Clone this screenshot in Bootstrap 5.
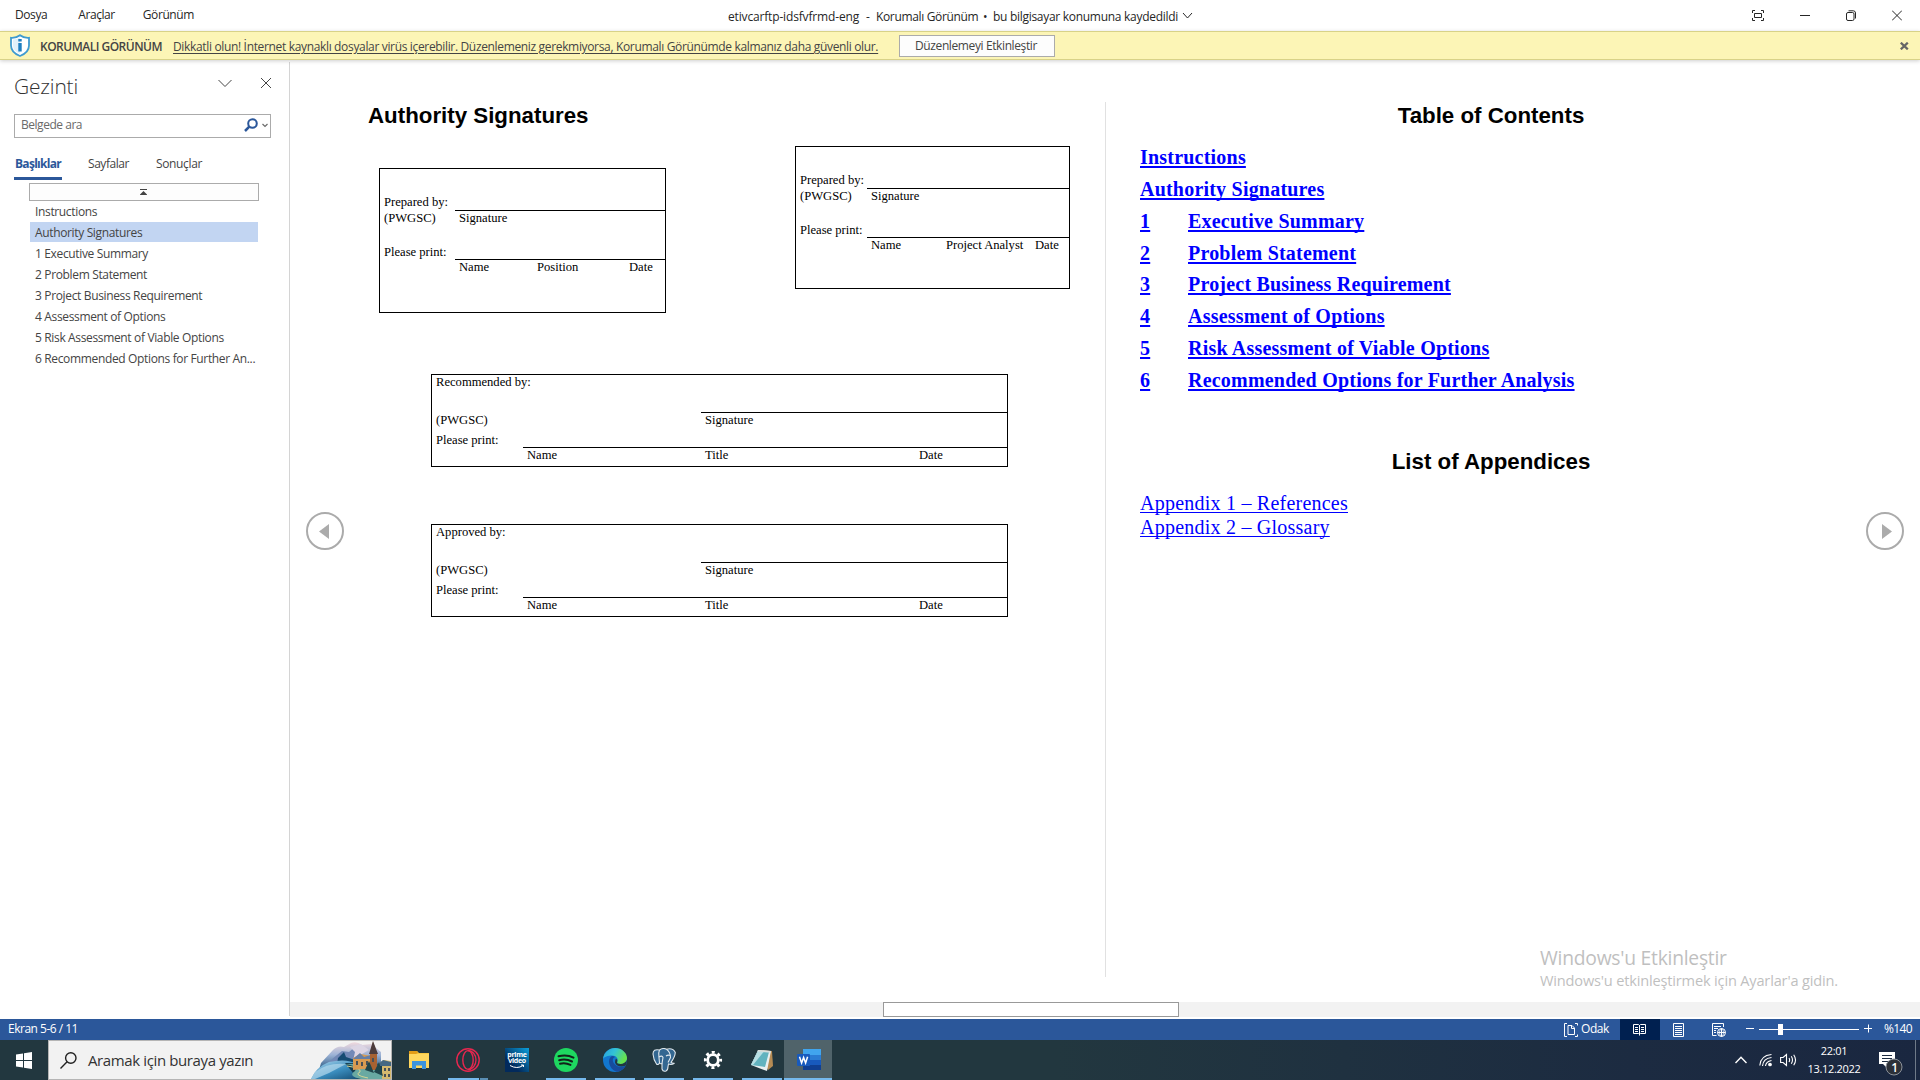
<!DOCTYPE html>
<html lang="tr">
<head>
<meta charset="utf-8">
<meta name="viewport" content="width=device-width, initial-scale=1">
<title>etivcarftp-idsfvfrmd-eng - Korumalı Görünüm</title>
<link rel="stylesheet" href="https://cdn.jsdelivr.net/npm/bootstrap@5.3.0/dist/css/bootstrap.min.css">
<style>
  html, body { height: 100%; overflow: hidden; }
  body { font: 12px/18px "Open Sans", "Noto Sans", sans-serif; letter-spacing: -.35px; color: #262626; background: #fff; white-space: nowrap; }
  svg { display: block; flex: none; }
  .line-ico { fill: none; stroke: currentColor; }
  .app-shell { width: 1920px; height: 1080px; }

  /* title bar */
  .title-bar { height: 31px; }
  .menu-side { width: 728px; padding: 0 0 2px 15px; gap: 31px; letter-spacing: -.42px; }
  .menu-side span:nth-child(3) { margin-left: -3px; }
  .doc-title span { padding-top: 2px; }
  .doc-name { letter-spacing: -.16px; width: 138px; }
  .t-dash { width: 10px; }
  .t-mode { width: 107px; }
  .t-place { width: 189px; letter-spacing: -.29px; }
  .win-tools { gap: 36px; padding-right: 18px; padding-bottom: 1px; }

  /* protected view */
  .guard-bar { height: 29px; background: #fcf5b6; border: solid #d8d288; border-width: 1px 0; box-shadow: 0 1px 4px rgba(0,0,0,.2); z-index: 2; position: relative; color: #444; padding: 0 11px 0 9px; }
  .guard-title { font-weight: 600; letter-spacing: -.5px; width: 133px; margin-left: 9px; padding-top: 3px; }
  .guard-link { letter-spacing: -.34px; width: 726px; padding-top: 3px; text-underline-offset: 2px; }
  .guard-btn { width: 156px; height: 22px; border: 1px solid #ababab; background: #fdfdfd; font-size: 12px; line-height: 18px; letter-spacing: -.39px; padding: 0 2px 0 0; border-radius: 0; color: #444; }

  /* navigation pane */
  .nav-pane { width: 290px; border-right: 1px solid #d4d4d4; padding: 12px 18px 0 14px; color: #444; margin-top: 2px; margin-bottom: 3px; }
  .pane-title { font-size: 21px; line-height: 28px; font-weight: 300; letter-spacing: -.19px; color: #333; margin-top: -2px; }
  .pane-tool-a { margin: 5px 28px 0 0; }
  .pane-tool-b { margin: 3px -1px 0 0; }
  .find-box { height: 24px; border: 1px solid #ababab; margin-top: 14px; padding: 0 2px 2px 6px; color: #6a6a6a; letter-spacing: -.47px; }
  .pane-tabs { margin-top: 15px; height: 27px; color: #444; gap: 26px; }
  .pane-tabs div { padding-top: 2px; }
  .pane-tabs .on { width: 48px; padding-left: 1px; font-weight: 700; letter-spacing: -.71px; color: #2b579a; border-bottom: 3px solid #2b579a; }
  .pane-tabs .mid { width: 42px; letter-spacing: -.45px; }
  .fold-box { height: 18px; border: 1px solid #ababab; background: #fdfdfd; margin: 3px 12px 0 15px; padding-right: 1px; color: #444; }
  .outline-list div { height: 21px; line-height: 21px; margin: 0 13px 0 16px; padding-left: 5px; }
  .outline-list .on { background: linear-gradient(#c2d5f2, #c2d5f2) 0 0/100% 20px no-repeat; }

  /* reading pages */
  .page-left { width: 815px; padding: 43px 0 0 78px; }
  .page-right { width: 815px; height: 875px; margin-top: 42px; border-left: 1px solid #e1e1e1; padding: 1px 78px 0 34px; }
  .doc-head { font: 700 22.3px/26px "Liberation Sans", Arial, sans-serif; letter-spacing: 0; color: #000; margin: 0; }
  .doc-head.second { margin-top: 49px; }
  .sign { font: 12.6px/14px "Liberation Serif", "Times New Roman", serif; letter-spacing: 0; color: #000; border: 1px solid #000; display: grid; align-content: start; }
  .sign > div { padding-left: 4px; }
  .sign > .lead-in { padding-bottom: 2px; }
  .sign > .stack-in { padding-bottom: 1px; }
  .ruled { border-bottom: 1px solid #000; }
  .sign-a { width: 287px; height: 145px; grid-template: 42px 49px 14px / 75px 78px 92px 1fr; margin: 39px 0 0 11px; }
  .sign-b { width: 275px; height: 143px; grid-template: 42px 49px 14px / 71px 75px 89px 1fr; margin: 17px 0 0 129px; }
  .sign-wide { width: 577px; height: 93px; grid-template: 38px 35px 14px / 91px 178px 214px 1fr; margin: 57px 0 0 63px; }
  .sign-wide.first { margin-top: 61px; }
  .span-3 { grid-column: span 3; }
  .span-2 { grid-column: span 2; }
  .toc { font: 700 20px/24px "Liberation Serif", "Times New Roman", serif; letter-spacing: .21px; margin-top: 16px; }
  .toc a, .apx a { color: #00f; text-decoration-skip-ink: none; }
  .toc a { text-decoration-thickness: 2px; text-underline-offset: 2px; }
  .toc > div { height: 31.86px; }
  .toc .num { width: 48px; }
  .apx { font: 20px/24px "Liberation Serif", "Times New Roman", serif; letter-spacing: .23px; margin-top: 16px; }
  .apx a { text-decoration-thickness: 1px; text-underline-offset: 2px; }
  .flip { position: absolute; top: 452px; }
  .flip-prev { left: 16px; }
  .flip-next { left: 1576px; }
  .ghost-note { position: absolute; left: 1250px; top: 884px; color: #bfbfbf; font-size: 14.6px; line-height: 22px; letter-spacing: -.18px; }
  .ghost-note .big { font-size: 19.3px; line-height: 28px; letter-spacing: -.25px; margin-bottom: -3px; }
  .h-track { height: 15px; background: #f2f2f2; margin-bottom: 2px; }
  .h-thumb { width: 296px; height: 15px; margin-left: 593px; background: #fff; border: 1px solid #999; }

  /* status bar */
  .state-bar { height: 21px; background: #2b579a; color: #fff; padding: 0 8px; }
  .state-bar > span { padding-bottom: 1px; letter-spacing: -.5px; }
  .state-bar .focus-label { width: 40px; padding-left: 3px; margin-right: 2px; letter-spacing: -.41px; }
  .state-bar .zoom-label { width: 28px; letter-spacing: -.63px; }
  .zoom-rail { margin: 0 12px 0 6px; }
  .view-btn { width: 40px; height: 21px; padding-right: 2px; }
  .view-on { background: #002050; }

  /* taskbar */
  .task-bar { height: 40px; background: linear-gradient(90deg, #22373f 0, #22373f 55%, #1c2b41 85%, #1a2740); color: #fff; }
  .start-btn { width: 48px; padding-left: 16px; }
  .find-task { width: 344px; height: 40px; background: #f2f2f2; border: 1px solid #b5b5b5; color: #333; font-size: 15px; letter-spacing: -.38px; padding-left: 11px; margin-right: 3px; }
  .find-task span { padding-left: 11px; }
  .task-app { width: 48px; height: 40px; margin-right: 1px; position: relative; }
  .task-app.run::after { content: ""; position: absolute; left: 4px; right: 4px; bottom: 0; height: 2px; background: #76b9ed; }
  .task-app.front { background: #50636a; margin-left: -3px; padding-left: 1px; }
  .task-app.front::after { left: 0; right: 0; }
  .task-app.multi::after { background: linear-gradient(90deg, #76b9ed 31px, #22373f 31px, #22373f 32px, #5a8fb5 32px); }
  .prime { width: 24px; height: 24px; background: linear-gradient(45deg, #022a5c 30%, #0a9fdc); font-size: 7px; line-height: 6px; font-weight: 700; letter-spacing: -.3px; text-align: center; padding-top: 4px; }
  .tray { gap: 7px; }
  .tray-more { margin-right: 5px; }
  .clock { width: 60px; font-size: 11px; line-height: 18px; letter-spacing: -.3px; text-align: center; margin-left: -1px; margin-right: 7px; }
  .note-ico { margin: 6px 4px 0 0; }
  .peek { width: 5px; height: 40px; border-left: 1px solid #6f7a88; }
</style>
<script src="https://cdn.jsdelivr.net/npm/bootstrap@5.3.0/dist/js/bootstrap.bundle.min.js"></script>
</head>
<body>
<div class="app-shell d-flex flex-column">

  <header class="title-bar d-flex align-items-center">
    <nav class="menu-side d-flex"><span>Dosya</span><span>Araçlar</span><span>Görünüm</span></nav>
    <div class="doc-title d-flex align-items-center flex-grow-1">
      <span class="doc-name">etivcarftp-idsfvfrmd-eng</span>
      <span class="t-dash">-</span>
      <span class="t-mode">Korumalı Görünüm</span>
      <span class="t-dash">•</span>
      <span class="t-place">bu bilgisayar konumuna kaydedildi</span>
      <svg class="line-ico" width="11" height="8" viewBox="0 0 11 8"><path d="M1 1l4.500 5L10 1"/></svg>
    </div>
    <div class="win-tools d-flex align-items-center">
      <svg class="line-ico" width="12" height="11" viewBox="0 0 12 11"><path d="M.5 3V.5H3M9 .5h2.500V3M11.500 8v2.500H9M3 10.500H.5V8M2.500 3.500h7v4h-7z"/></svg>
      <svg class="line-ico" width="10" height="11" viewBox="0 0 10 11"><path d="M0 5.500h10"/></svg>
      <svg class="line-ico" width="10" height="11" viewBox="0 0 10 11"><rect x=".5" y="2.500" width="7.500" height="8" rx="1.500"/><path d="M2.500.8h4.800Q9.500.8 9.500 3v5.500"/></svg>
      <svg class="line-ico" width="10" height="11" viewBox="0 0 10 11"><path d="M0 .5l10 10M10 .5l-10 10"/></svg>
    </div>
  </header>

  <div class="guard-bar d-flex align-items-center">
    <svg width="22" height="23" viewBox="0 0 22 23"><path d="M11 1.200q4 3 9 2.600v7.700q0 7-9 10.500Q2 18.500 2 11.500V3.800q5 .4 9-2.600z" fill="#fff" stroke="#3f9bd0" stroke-width="1.800"/><path d="M11 3.200v16.800q-7-3-7-8.500V5.600q4 0 7-2.400z" fill="#e1f1fa"/><path d="M9.300 5h3.400v2.500H9.300zM9.300 9h3.400v8.500H9.300z" fill="#1f7fc0"/></svg>
    <span class="guard-title">KORUMALI GÖRÜNÜM</span>
    <u class="guard-link">Dikkatli olun! İnternet kaynaklı dosyalar virüs içerebilir. Düzenlemeniz gerekmiyorsa, Korumalı Görünümde kalmanız daha güvenli olur.</u>
    <button class="btn guard-btn">Düzenlemeyi Etkinleştir</button>
    <svg class="ms-auto" width="9" height="8" viewBox="0 0 9 8" fill="none" stroke="#666" stroke-width="2.300"><path d="M.8.700l7 6.600M7.800.700l-7 6.600"/></svg>
  </div>

  <div class="d-flex flex-grow-1">
    <aside class="nav-pane">
      <div class="d-flex">
        <h1 class="pane-title mb-0 flex-grow-1">Gezinti</h1>
        <svg class="line-ico pane-tool-a" width="14" height="9" viewBox="0 0 14 9"><path d="M.5 1l6.500 6.500L13.500 1"/></svg>
        <svg class="line-ico pane-tool-b" width="12" height="12" viewBox="0 0 12 12"><path d="M1 1l10 10M11 1L1 11"/></svg>
      </div>
      <div class="find-box d-flex align-items-center">
        <span class="flex-grow-1">Belgede ara</span>
        <svg width="14" height="14" viewBox="0 0 14 14" fill="none" stroke="#2b579a"><circle cx="8.500" cy="5.500" r="4.300" stroke-width="2"/><path d="M5.300 8.700L1 13" stroke-width="2.500"/></svg>
        <svg class="line-ico ms-1" width="6" height="5" viewBox="0 0 6 5" stroke-width="1.200"><path d="M.5 1L3 3.500 5.500 1"/></svg>
      </div>
      <div class="pane-tabs d-flex">
        <div class="on">Başlıklar</div><div class="mid">Sayfalar</div><div>Sonuçlar</div>
      </div>
      <div class="fold-box d-flex justify-content-center align-items-center">
        <svg width="7" height="7" viewBox="0 0 7 7" fill="#444"><path d="M0 0h7v1H0zM3.500 2L7 5.500V6H0v-.5z"/></svg>
      </div>
      <div class="outline-list">
        <div>Instructions</div>
        <div class="on">Authority Signatures</div>
        <div>1 Executive Summary</div>
        <div>2 Problem Statement</div>
        <div>3 Project Business Requirement</div>
        <div>4 Assessment of Options</div>
        <div>5 Risk Assessment of Viable Options</div>
        <div>6 Recommended Options for Further An...</div>
      </div>
    </aside>

    <main class="flex-grow-1 d-flex flex-column position-relative">
      <div class="d-flex flex-grow-1">
        <section class="page-left">
          <h2 class="doc-head">Authority Signatures</h2>
          <div class="d-flex align-items-start">
            <div class="sign sign-a">
              <div class="lead-in d-flex align-items-end">Prepared by:</div><div class="ruled span-3"></div>
              <div class="stack-in d-flex flex-column justify-content-between"><span>(PWGSC)</span><span>Please print:</span></div><div class="ruled span-3">Signature</div>
              <div></div><div>Name</div><div>Position</div><div>Date</div>
            </div>
            <div class="sign sign-b">
              <div class="lead-in d-flex align-items-end">Prepared by:</div><div class="ruled span-3"></div>
              <div class="stack-in d-flex flex-column justify-content-between"><span>(PWGSC)</span><span>Please print:</span></div><div class="ruled span-3">Signature</div>
              <div></div><div>Name</div><div>Project Analyst</div><div>Date</div>
            </div>
          </div>
          <div class="sign sign-wide first">
            <div class="span-2">Recommended by:</div><div class="ruled span-2"></div>
            <div class="stack-in d-flex flex-column justify-content-between"><span>(PWGSC)</span><span>Please print:</span></div><div class="ruled"></div><div class="ruled span-2">Signature</div>
            <div></div><div class="ps-1">Name</div><div>Title</div><div>Date</div>
          </div>
          <div class="sign sign-wide">
            <div class="span-2">Approved by:</div><div class="ruled span-2"></div>
            <div class="stack-in d-flex flex-column justify-content-between"><span>(PWGSC)</span><span>Please print:</span></div><div class="ruled"></div><div class="ruled span-2">Signature</div>
            <div></div><div class="ps-1">Name</div><div>Title</div><div>Date</div>
          </div>
        </section>

        <section class="page-right">
          <h2 class="doc-head text-center">Table of Contents</h2>
          <div class="toc">
            <div><a href="#">Instructions</a></div>
            <div><a href="#">Authority Signatures</a></div>
            <div class="d-flex"><span class="num"><a href="#">1</a></span><a href="#">Executive Summary</a></div>
            <div class="d-flex"><span class="num"><a href="#">2</a></span><a href="#">Problem Statement</a></div>
            <div class="d-flex"><span class="num"><a href="#">3</a></span><a href="#">Project Business Requirement</a></div>
            <div class="d-flex"><span class="num"><a href="#">4</a></span><a href="#">Assessment of Options</a></div>
            <div class="d-flex"><span class="num"><a href="#">5</a></span><a href="#">Risk Assessment of Viable Options</a></div>
            <div class="d-flex"><span class="num"><a href="#">6</a></span><a href="#">Recommended Options for Further Analysis</a></div>
          </div>
          <h2 class="doc-head second text-center">List of Appendices</h2>
          <div class="apx">
            <div><a href="#">Appendix 1 – References</a></div>
            <div><a href="#">Appendix 2 – Glossary</a></div>
          </div>
        </section>
      </div>
      <div class="h-track"><div class="h-thumb"></div></div>

      <svg class="flip flip-prev" width="38" height="38" viewBox="0 0 38 38"><circle cx="19" cy="19" r="18" fill="#fff" stroke="#ababab" stroke-width="2"/><path d="M13 19.500L23 12v15z" fill="#ababab"/></svg>
      <svg class="flip flip-next" width="38" height="38" viewBox="0 0 38 38"><circle cx="19" cy="19" r="18" fill="#fff" stroke="#ababab" stroke-width="2"/><path d="M26 19.500L16 12v15z" fill="#ababab"/></svg>
      <div class="ghost-note"><div class="big">Windows'u Etkinleştir</div><div>Windows'u etkinleştirmek için Ayarlar'a gidin.</div></div>
    </main>
  </div>

  <div class="state-bar d-flex align-items-center">
    <span class="me-auto">Ekran 5-6 / 11</span>
    <svg width="14" height="14" viewBox="0 0 14 14" fill="none" stroke="#fff"><path d="M3 .5H.5v13H3M11 .5h2.500v2M11 13.500h2.500v-2M4 2.500h4l2.500 2.500v6.500H4zM7.500 2.500v3h3"/></svg>
    <span class="focus-label">Odak</span>
    <div class="view-btn view-on d-flex align-items-center justify-content-center"><svg width="13" height="13" viewBox="0 0 13 13" fill="none" stroke="#fff"><path d="M.5 1.500h5l1 1 1-1h5v9h-5l-1 1-1-1h-5zM6.500 2v10.500M2 4.500h3M2 6.500h3M2 8.500h3M8 4.500h3M8 6.500h3M8 8.500h3"/></svg></div>
    <div class="view-btn d-flex align-items-center justify-content-center"><svg width="12" height="14" viewBox="0 0 12 14" fill="none" stroke="#fff"><path d="M.5.500h10v13H.5zM2 3.500h7M2 5.500h7M2 7.500h7M2 9.500h7M2 11.500h7"/></svg></div>
    <div class="view-btn d-flex align-items-center justify-content-center"><svg width="14" height="14" viewBox="0 0 14 14" fill="none" stroke="#fff"><path d="M4.500 12.500h-4V.5h11V4M2 3.500h7M2 5.500h4M2 7.500h2M2 9.500h2"/><circle cx="9.500" cy="9.500" r="4"/><path d="M5.500 9.500h8M9.500 5.500v8"/><ellipse cx="9.500" cy="9.500" rx="2" ry="4" stroke-width=".7"/></svg></div>
    <svg class="zoom-rail" width="126" height="13" viewBox="0 0 126 13" fill="none" stroke="#fff"><path d="M0 5.500h8M118 5.500h8M122.500 1.500v8M13 6.500h100"/><path d="M32 1h5v11h-5z" fill="#fff" stroke="none"/></svg>
    <span class="zoom-label">%140</span>
  </div>

  <footer class="task-bar d-flex align-items-center">
    <div class="start-btn"><svg width="16" height="17" viewBox="0 0 16 17" fill="#fff"><path d="M0 2.500l7-1V8H0zM8 1.300L16 0v8H8zM0 9h7v6.500l-7-1zM8 9h8v8l-8-1.300z"/></svg></div>
    <div class="find-task d-flex align-items-center">
      <svg width="17" height="17" viewBox="0 0 17 17" fill="none" stroke="#222" stroke-width="1.400"><circle cx="10.800" cy="6" r="5.200"/><path d="M7.100 9.800L.5 16.400"/></svg>
      <span class="flex-grow-1">Aramak için buraya yazın</span>
      <svg width="80" height="38" viewBox="0 0 80 38">
        <defs>
          <linearGradient id="peak" x1="0" y1="0" x2="0" y2="1"><stop offset="0" stop-color="#f0d9de"/><stop offset=".45" stop-color="#9db3d6"/><stop offset="1" stop-color="#24567f"/></linearGradient>
          <linearGradient id="lake" x1="0" y1="0" x2="1" y2="1"><stop offset="0" stop-color="#b8dcf0"/><stop offset=".5" stop-color="#3b8ebf"/><stop offset="1" stop-color="#0e4166"/></linearGradient>
        </defs>
        <path d="M10 22L22 9q5-5 11-3l7-4q6-2 11 2l9-1 10 8v18H8z" fill="url(#peak)"/>
        <path d="M14 24l12-10 5-4 7 1 6-5 4 7 8 6-3 6H14z" fill="#7289b7"/>
        <path d="M27 17l6-6 2 5 9 3-4 5-14-1z" fill="#164b73"/>
        <path d="M39 6l11-3 8 6-7 4-9 7 2-9z" fill="#dcd5e4"/>
        <path d="M0 38Q5 26 18 21q18-4 28 2l12 15z" fill="url(#lake)"/>
        <path d="M4 31q13-10 31-8l-17 9-14 6H0z" fill="#b4d9ed" opacity=".7"/>
        <path d="M34 22l46 1v15H47z" fill="#173e50"/>
        <path d="M31 23q17 1 13 7-8 5 6 8h27l-14-10-17-5z" fill="#69a9a2"/>
        <path d="M36 25q15 2 13 6-7 3 8 6" fill="none" stroke="#d3d595"/>
        <path d="M42 17l7-4 12 2v14l-9-1-10 1z" fill="#d89a50"/><path d="M42 18l7-6 4 4 7-2 2 4H42z" fill="#667fa5"/>
        <path d="M59 13l3-12 4 12v16h-7z" fill="#a76232"/><path d="M58 13l4-13 5 13z" fill="#4c3c3b"/>
        <path d="M67 23l6-4 7 1v18H71V25z" fill="#d5b96f"/><path d="M66 24l6-5 8 2v4H66z" fill="#466983"/>
        <path d="M45 20h2v4h-2zM50 21h2v4h-2zM55 20h2v4h-2zM61 17h2v4h-2zM73 27h2v3h-2zM77 27h2v3h-2zM73 33h2v3h-2zM77 33h2v3h-2z" fill="#475057"/>
        <path d="M54 29l4-9 5 12zM63 31l5-10 4 14z" fill="#20454b"/>
      </svg>
    </div>
    <div class="task-app d-flex align-items-center justify-content-center"><svg width="22" height="20" viewBox="0 0 22 20"><path d="M1 1h8l2 2h10v15H1z" fill="#f7c843"/><path d="M1 1h8l1 2-2 1H1z" fill="#e39d17"/><path d="M1 4h20v14H1z" fill="#ffd75e"/><path d="M4 19v-8h14v8h-4v-3.500H8V19z" fill="#3e94dc"/></svg></div>
    <div class="task-app run multi d-flex align-items-center justify-content-center"><svg width="24" height="24" viewBox="0 0 24 24" fill="none" stroke="#e7274f"><circle cx="12" cy="12" r="11.200" stroke-width="1.400"/><ellipse cx="12" cy="12" rx="5.200" ry="9.400" stroke-width="1.400"/><path d="M12 2.500a8 9.500 0 0 1 0 19" stroke-width="1.300"/></svg></div>
    <div class="task-app d-flex align-items-center justify-content-center"><div class="prime">prime<br>video<svg width="24" height="6" viewBox="0 0 24 6" fill="none" stroke="#fff"><path d="M5 1.500q7 4 13 0M16 1h2.500v2"/></svg></div></div>
    <div class="task-app run d-flex align-items-center justify-content-center"><svg width="24" height="24" viewBox="0 0 24 24"><circle cx="12" cy="12" r="12" fill="#1ed760"/><path d="M4.500 8.300q8-2.300 15 1.300M5.200 12.200q6.800-1.800 12.800 1.300M6 15.700q5.500-1.300 10.500 1.200" fill="none" stroke="#12211a" stroke-width="2" stroke-linecap="round"/></svg></div>
    <div class="task-app run d-flex align-items-center justify-content-center"><svg width="24" height="24" viewBox="0 0 24 24"><defs><linearGradient id="edgeTop" x1="0" y1="0" x2="1" y2=".4"><stop offset="0" stop-color="#259be0"/><stop offset=".5" stop-color="#33c3d6"/><stop offset="1" stop-color="#66e24e"/></linearGradient></defs><circle cx="12" cy="12" r="12" fill="#1277cf"/><path d="M0 11C1 4 6 0 12 0c7 0 12 5 12 10 0 4-3 6-6.500 6-2.500 0-4-.8-3.300-2 1.800-3-.7-6.500-5.200-6.500C5 7.500 1 9 0 11z" fill="url(#edgeTop)"/><path d="M9 8C4 10 5 21 14 23.800c4-.4 7-3 8.700-6-4 2.200-8.700 1.200-11.200-1.800C9 13 9.500 10 12 9q-1-1-3-1z" fill="#174b9d"/><path d="M14.200 14c-.7 1.200.8 2 3.300 2 3 0 5.400-1.500 6.300-4.200Q24 15 22.700 17.600C18 19.600 13 18 12 14.500q0-2.500 1-4 2 1.300 1.200 3.500z" fill="#22373f"/></svg></div>
    <div class="task-app run d-flex align-items-center justify-content-center"><svg width="24" height="24" viewBox="0 0 24 24" fill="#336791" stroke="#dfe7ec" stroke-width="1.100"><path d="M7.500 2Q1 .5 1 6q.5 6 3.500 10 1.500 1.500 3-1 1 1.200 2.500.5v5.500q1 3 4 2 2-1 2-4.500l.5-2.500q3 1 6-.8-2.500.2-3.500-.9Q23 9 23.300 4.500 21-.5 14.500 1.200 11-.5 7.500 2z"/><path d="M7.500 2Q6 5 7 9.500L7.500 15M14.500 1.200q4 2.800 4 8.300l-2.500 5M7 9q3-2 4 .5-.5 3-1 6M14 8q2-1.500 4.500-.5" fill="none"/></svg></div>
    <div class="task-app run d-flex align-items-center justify-content-center"><svg width="20" height="20" viewBox="-10 -10 20 20"><circle r="5.300" fill="none" stroke="#fff" stroke-width="2.800"/><circle r="7.700" fill="none" stroke="#fff" stroke-width="2.800" stroke-dasharray="3 3.048" stroke-dashoffset="1.500"/></svg></div>
    <div class="task-app run d-flex align-items-center justify-content-center"><svg width="24" height="24" viewBox="0 0 24 24"><path d="M8 2l14 1 1 15-5 4z" fill="#b58b54"/><path d="M8 2l13 1-4 20-16-6z" fill="#e9eff0"/><path d="M8 3l11 1-4 15-14-2z" fill="#62b3bf"/><path d="M8 3l6 .5L3 17l-2-.3z" fill="#b8dfe4"/><path d="M8 2l13 1-.3 1.700L7.500 3.500z" fill="#d9dedc"/></svg></div>
    <div class="task-app run front d-flex align-items-center justify-content-center"><svg width="24" height="24" viewBox="0 0 24 24"><path d="M6 1h18v6H6z" fill="#41a5ee"/><path d="M6 7h18v5H6z" fill="#2b7cd3"/><path d="M6 12h18v5H6z" fill="#185abd"/><path d="M6 17h18v5H6z" fill="#103f91"/><rect y="6" width="13" height="12" rx="1" fill="#185abd"/><path d="M2.500 8.800L4.600 15l2-5.500L8.600 15l2-6.200" fill="none" stroke="#fff" stroke-width="1.500"/></svg></div>

    <div class="tray d-flex align-items-center ms-auto">
      <svg class="line-ico tray-more" width="12" height="8" viewBox="0 0 12 8" stroke-width="1.400"><path d="M.5 7L6 1.200 11.500 7"/></svg>
      <svg class="line-ico" width="14" height="14" viewBox="0 0 14 14" stroke-width="1.100"><path d="M.8 12.500Q1.500 2.500 12.500 1.500M3.500 13Q4 5.500 12.500 4.500M6.500 13Q7 8.500 12.500 7.500"/><circle cx="11" cy="11.500" r="1.300" fill="#fff"/></svg>
      <svg class="line-ico" width="18" height="14" viewBox="0 0 18 14" stroke-width="1.100"><path d="M.6 4.500h2.500L6.500 1.500v11L3.100 9.500H.6zM9 5q1.300 2 0 4M11.300 3.300q2.400 3.700 0 7.400M13.700 1.700q3.700 5.300 0 10.600"/></svg>
      <div class="clock">22:01<br>13.12.2022</div>
      <svg class="note-ico" width="26" height="28" viewBox="0 0 26 28"><path d="M1 3h16v12H9v4l-4-4H1z" fill="#fff"/><path d="M4 6.500h10M4 9.500h10M4 12.500h7" stroke="#1c2b41"/><circle cx="16" cy="18" r="8" fill="#2c3038" stroke="#8d939b"/><text x="13.300" y="22.500" fill="#fff" font-size="12" font-weight="600">1</text></svg>
      <div class="peek"></div>
    </div>
  </footer>
</div>
</body>
</html>
